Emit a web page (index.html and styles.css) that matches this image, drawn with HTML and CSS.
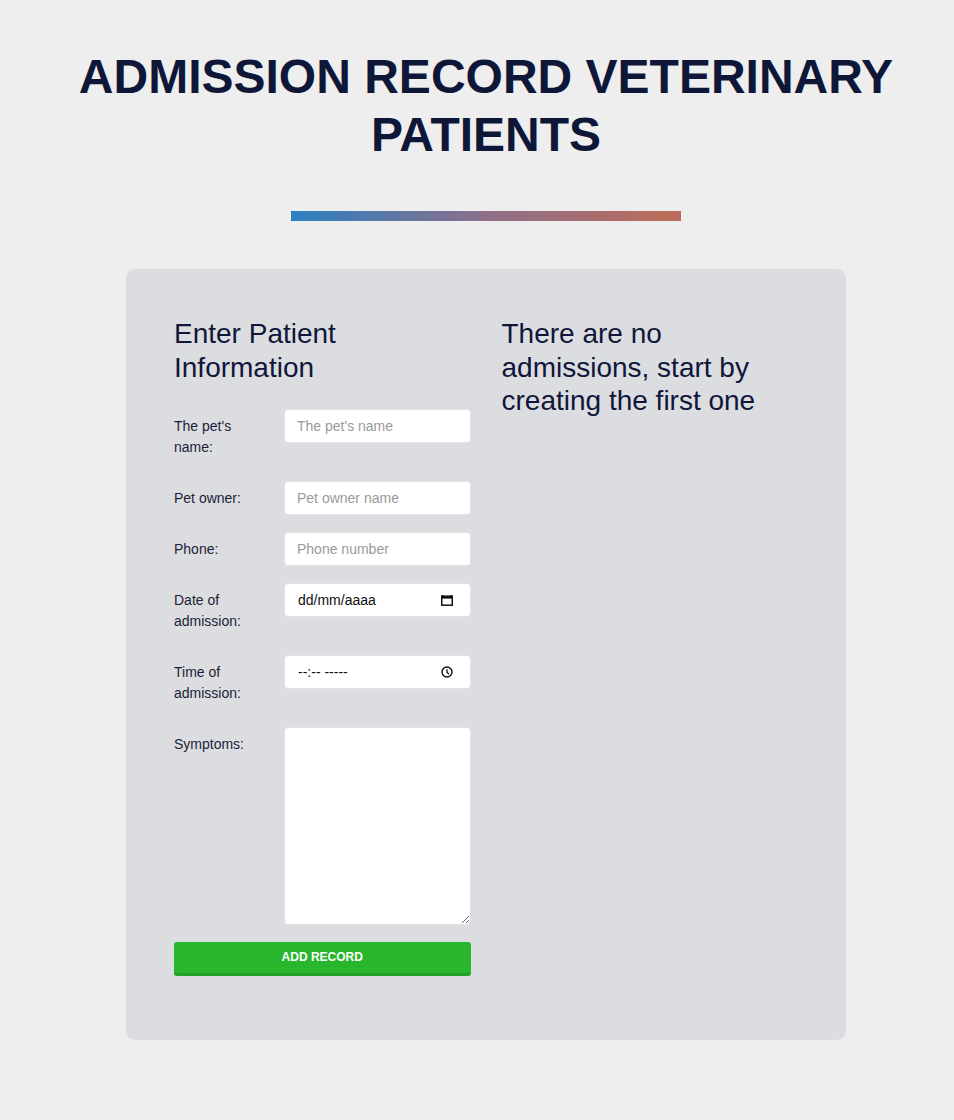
FILE: index.html
```html
<!DOCTYPE html>
<html lang="en">
<head>
<meta charset="utf-8">
<title>Admission Record Veterinary Patients</title>
<link rel="stylesheet" href="styles.css">
</head>
<body>
<div class="page">
  <h1 class="title">ADMISSION RECORD VETERINARY PATIENTS</h1>
  <div class="divider"></div>
  <main class="card">
    <section class="col">
      <h2 class="subtitle">Enter Patient Information</h2>
      <form class="form">
        <div class="row">
          <label class="label" for="pet">The pet's name:</label>
          <input class="field" id="pet" type="text" placeholder="The pet's name">
        </div>
        <div class="row">
          <label class="label" for="owner">Pet owner:</label>
          <input class="field" id="owner" type="text" placeholder="Pet owner name">
        </div>
        <div class="row">
          <label class="label" for="phone">Phone:</label>
          <input class="field" id="phone" type="text" placeholder="Phone number">
        </div>
        <div class="row">
          <label class="label">Date of admission:</label>
          <div class="field fake">
            <span class="fake-text">dd/mm/aaaa</span>
            <svg class="fake-icon" width="12" height="12" viewBox="0 0 12 12" aria-hidden="true">
              <rect x="1" y="1" width="1.6" height="1.6" fill="#111"/>
              <rect x="9.4" y="1" width="1.6" height="1.6" fill="#111"/>
              <rect x="0.75" y="2.2" width="10.5" height="9" fill="none" stroke="#111" stroke-width="1.5"/>
              <rect x="0.75" y="2.2" width="10.5" height="2.4" fill="#111"/>
            </svg>
          </div>
        </div>
        <div class="row">
          <label class="label">Time of admission:</label>
          <div class="field fake">
            <span class="fake-text">--:-- -----</span>
            <svg class="fake-icon" width="12" height="12" viewBox="0 0 12 12" aria-hidden="true">
              <circle cx="6" cy="6" r="5" fill="none" stroke="#111" stroke-width="1.4"/>
              <path d="M6 3.2V6.3L8 8.2" fill="none" stroke="#111" stroke-width="1.3"/>
            </svg>
          </div>
        </div>
        <div class="row">
          <label class="label" for="symptoms">Symptoms:</label>
          <textarea class="field area" id="symptoms"></textarea>
        </div>
        <button class="btn" type="button">ADD RECORD</button>
      </form>
    </section>
    <section class="col">
      <h2 class="subtitle">There are no admissions, start by creating the first one</h2>
    </section>
  </main>
</div>
</body>
</html>
```
FILE: styles.css
```css
* { box-sizing: border-box; }

html, body {
  margin: 0;
  padding: 0;
  background: #eeeeee;
}

body {
  font-family: "Liberation Sans", Arial, sans-serif;
  color: #10173a;
}

.page {
  padding: 48px 0 80px 18px;
}

.title {
  margin: 0 auto 48px;
  max-width: 830px;
  text-align: center;
  font-size: 48px;
  font-weight: 700;
  line-height: 57.6px;
  color: #0f1738;
}

.divider {
  width: 390px;
  height: 10px;
  margin: 0 auto 48px;
  background: linear-gradient(to right, #2b80c2, #8e6f8a 50%, #bd6c58);
}

.card {
  width: 720px;
  margin: 0 auto;
  padding: 48px;
  background: #dcdde1;
  border-radius: 9px;
  display: grid;
  grid-template-columns: 1fr 1fr;
  column-gap: 31px;
  align-items: start;
}

.subtitle {
  margin: 0 0 25px;
  font-size: 28px;
  font-weight: 400;
  line-height: 33.6px;
  color: #10173a;
}

.form {
  display: flex;
  flex-direction: column;
}

.row {
  display: grid;
  grid-template-columns: 110px 1fr;
  align-items: start;
  margin-bottom: 16px;
}

.label {
  padding: 7px 14px 7px 0;
  font-size: 14px;
  line-height: 21px;
  color: #1c1d36;
}

.field {
  width: 100%;
  height: 34px;
  margin: 0;
  padding: 6px 12px;
  font-family: "Liberation Sans", Arial, sans-serif;
  font-size: 14px;
  color: #111;
  background: #fff;
  border: 1px solid #e3e3e6;
  border-radius: 4px;
  outline: none;
}

.field::placeholder {
  color: #9a9a9a;
}

.fake {
  display: flex;
  align-items: center;
  justify-content: space-between;
  padding: 6px 17px 6px 13px;
}

.fake-text {
  font-size: 14px;
  color: #111;
}

.fake-icon {
  display: block;
  flex: none;
}

.area {
  height: 198px;
  resize: vertical;
  display: block;
}

.btn {
  width: 100%;
  height: 34px;
  margin: 1px 0 16px;
  padding: 0 0 2px;
  font-family: "Liberation Sans", Arial, sans-serif;
  font-size: 12px;
  font-weight: 700;
  color: #fff;
  background: #28b62c;
  border: 0;
  border-bottom: 3px solid #23a127;
  border-radius: 3px;
  cursor: pointer;
}
```
